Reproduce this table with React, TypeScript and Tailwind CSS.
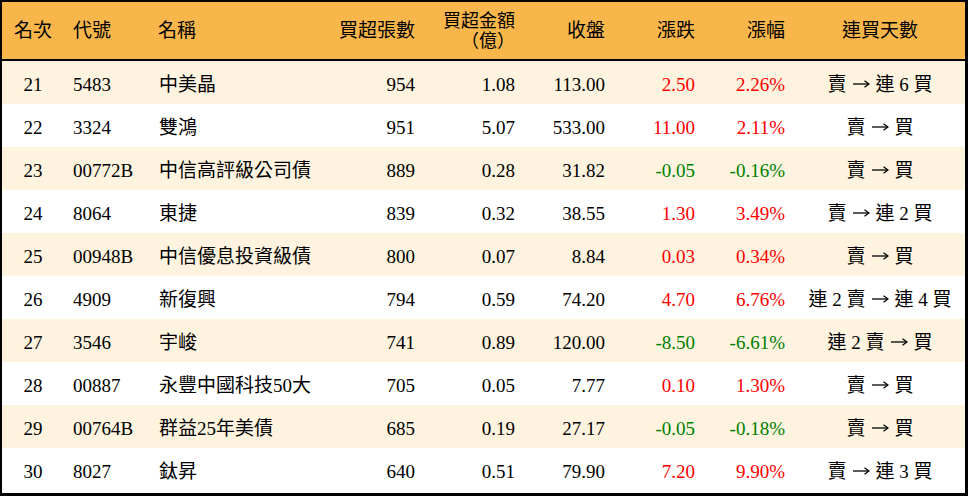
import React from "react";

type Row = {
  rank: number;
  code: string;
  name: string;
  lots: number;
  amount: string;
  close: string;
  change: string;
  pct: string;
  from: string;
  to: string;
};

const rows: Row[] = [
  { rank: 21, code: "5483", name: "中美晶", lots: 954, amount: "1.08", close: "113.00", change: "2.50", pct: "2.26%", from: "賣", to: "連 6 買" },
  { rank: 22, code: "3324", name: "雙鴻", lots: 951, amount: "5.07", close: "533.00", change: "11.00", pct: "2.11%", from: "賣", to: "買" },
  { rank: 23, code: "00772B", name: "中信高評級公司債", lots: 889, amount: "0.28", close: "31.82", change: "-0.05", pct: "-0.16%", from: "賣", to: "買" },
  { rank: 24, code: "8064", name: "東捷", lots: 839, amount: "0.32", close: "38.55", change: "1.30", pct: "3.49%", from: "賣", to: "連 2 買" },
  { rank: 25, code: "00948B", name: "中信優息投資級債", lots: 800, amount: "0.07", close: "8.84", change: "0.03", pct: "0.34%", from: "賣", to: "買" },
  { rank: 26, code: "4909", name: "新復興", lots: 794, amount: "0.59", close: "74.20", change: "4.70", pct: "6.76%", from: "連 2 賣", to: "連 4 買" },
  { rank: 27, code: "3546", name: "宇峻", lots: 741, amount: "0.89", close: "120.00", change: "-8.50", pct: "-6.61%", from: "連 2 賣", to: "買" },
  { rank: 28, code: "00887", name: "永豐中國科技50大", lots: 705, amount: "0.05", close: "7.77", change: "0.10", pct: "1.30%", from: "賣", to: "買" },
  { rank: 29, code: "00764B", name: "群益25年美債", lots: 685, amount: "0.19", close: "27.17", change: "-0.05", pct: "-0.18%", from: "賣", to: "買" },
  { rank: 30, code: "8027", name: "鈦昇", lots: 640, amount: "0.51", close: "79.90", change: "7.20", pct: "9.90%", from: "賣", to: "連 3 買" },
];

const cols = "grid grid-cols-[62px_86px_180px_95px_100px_90px_90px_90px_170px] items-center";

function Arrow() {
  return (
    <svg width="17" height="10" viewBox="0 0 17 10" className="inline-block mx-[6px] align-[2px]">
      <path d="M0 5H15.5" stroke="#000" strokeWidth="1.3" fill="none" />
      <path d="M11.5 1.8L16 5L11.5 8.2" stroke="#000" strokeWidth="1.3" fill="none" />
    </svg>
  );
}

export default function App() {
  return (
    <div
      className="w-[968px] h-[496px] bg-white border-black border-l-2 border-t-2 border-r-[3px] border-b-[3px] text-[19px] text-black overflow-hidden"
      style={{ fontFamily: '"Liberation Serif", "Noto Sans CJK TC", serif' }}
    >
      {/* header */}
      <div className={`${cols} h-[59px] bg-[#f9b74b] border-b-2 border-black leading-[20px]`}>
        <div className="text-center">名次</div>
        <div className="pl-[9px]">代號</div>
        <div className="pl-[8px]">名稱</div>
        <div className="text-right pr-[10px]">買超張數</div>
        <div className="text-right pr-[10px] text-[18px]">
          <div className="h-[20px]">買超金額</div>
          <div className="h-[20px]">（億）</div>
        </div>
        <div className="text-right pr-[10px]">收盤</div>
        <div className="text-right pr-[10px]">漲跌</div>
        <div className="text-right pr-[10px]">漲幅</div>
        <div className="text-center">連買天數</div>
      </div>

      {rows.map((r, i) => {
        const down = r.change.startsWith("-");
        const tone = down ? "text-[#008000]" : "text-[#ff0000]";
        return (
          <div
            key={r.rank}
            className={`${cols} h-[43px] leading-[20px] pt-[5px] ${i % 2 === 0 ? "bg-[#fdf3df]" : "bg-white"}`}
          >
            <div className="text-center">{r.rank}</div>
            <div className="pl-[9px]">{r.code}</div>
            <div className="pl-[9px] whitespace-nowrap">{r.name}</div>
            <div className="text-right pr-[10px]">{r.lots}</div>
            <div className="text-right pr-[10px]">{r.amount}</div>
            <div className="text-right pr-[10px]">{r.close}</div>
            <div className={`text-right pr-[10px] ${tone}`}>{r.change}</div>
            <div className={`text-right pr-[10px] ${tone}`}>{r.pct}</div>
            <div className="text-center whitespace-nowrap">
              {r.from}
              <Arrow />
              {r.to}
            </div>
          </div>
        );
      })}
    </div>
  );
}
